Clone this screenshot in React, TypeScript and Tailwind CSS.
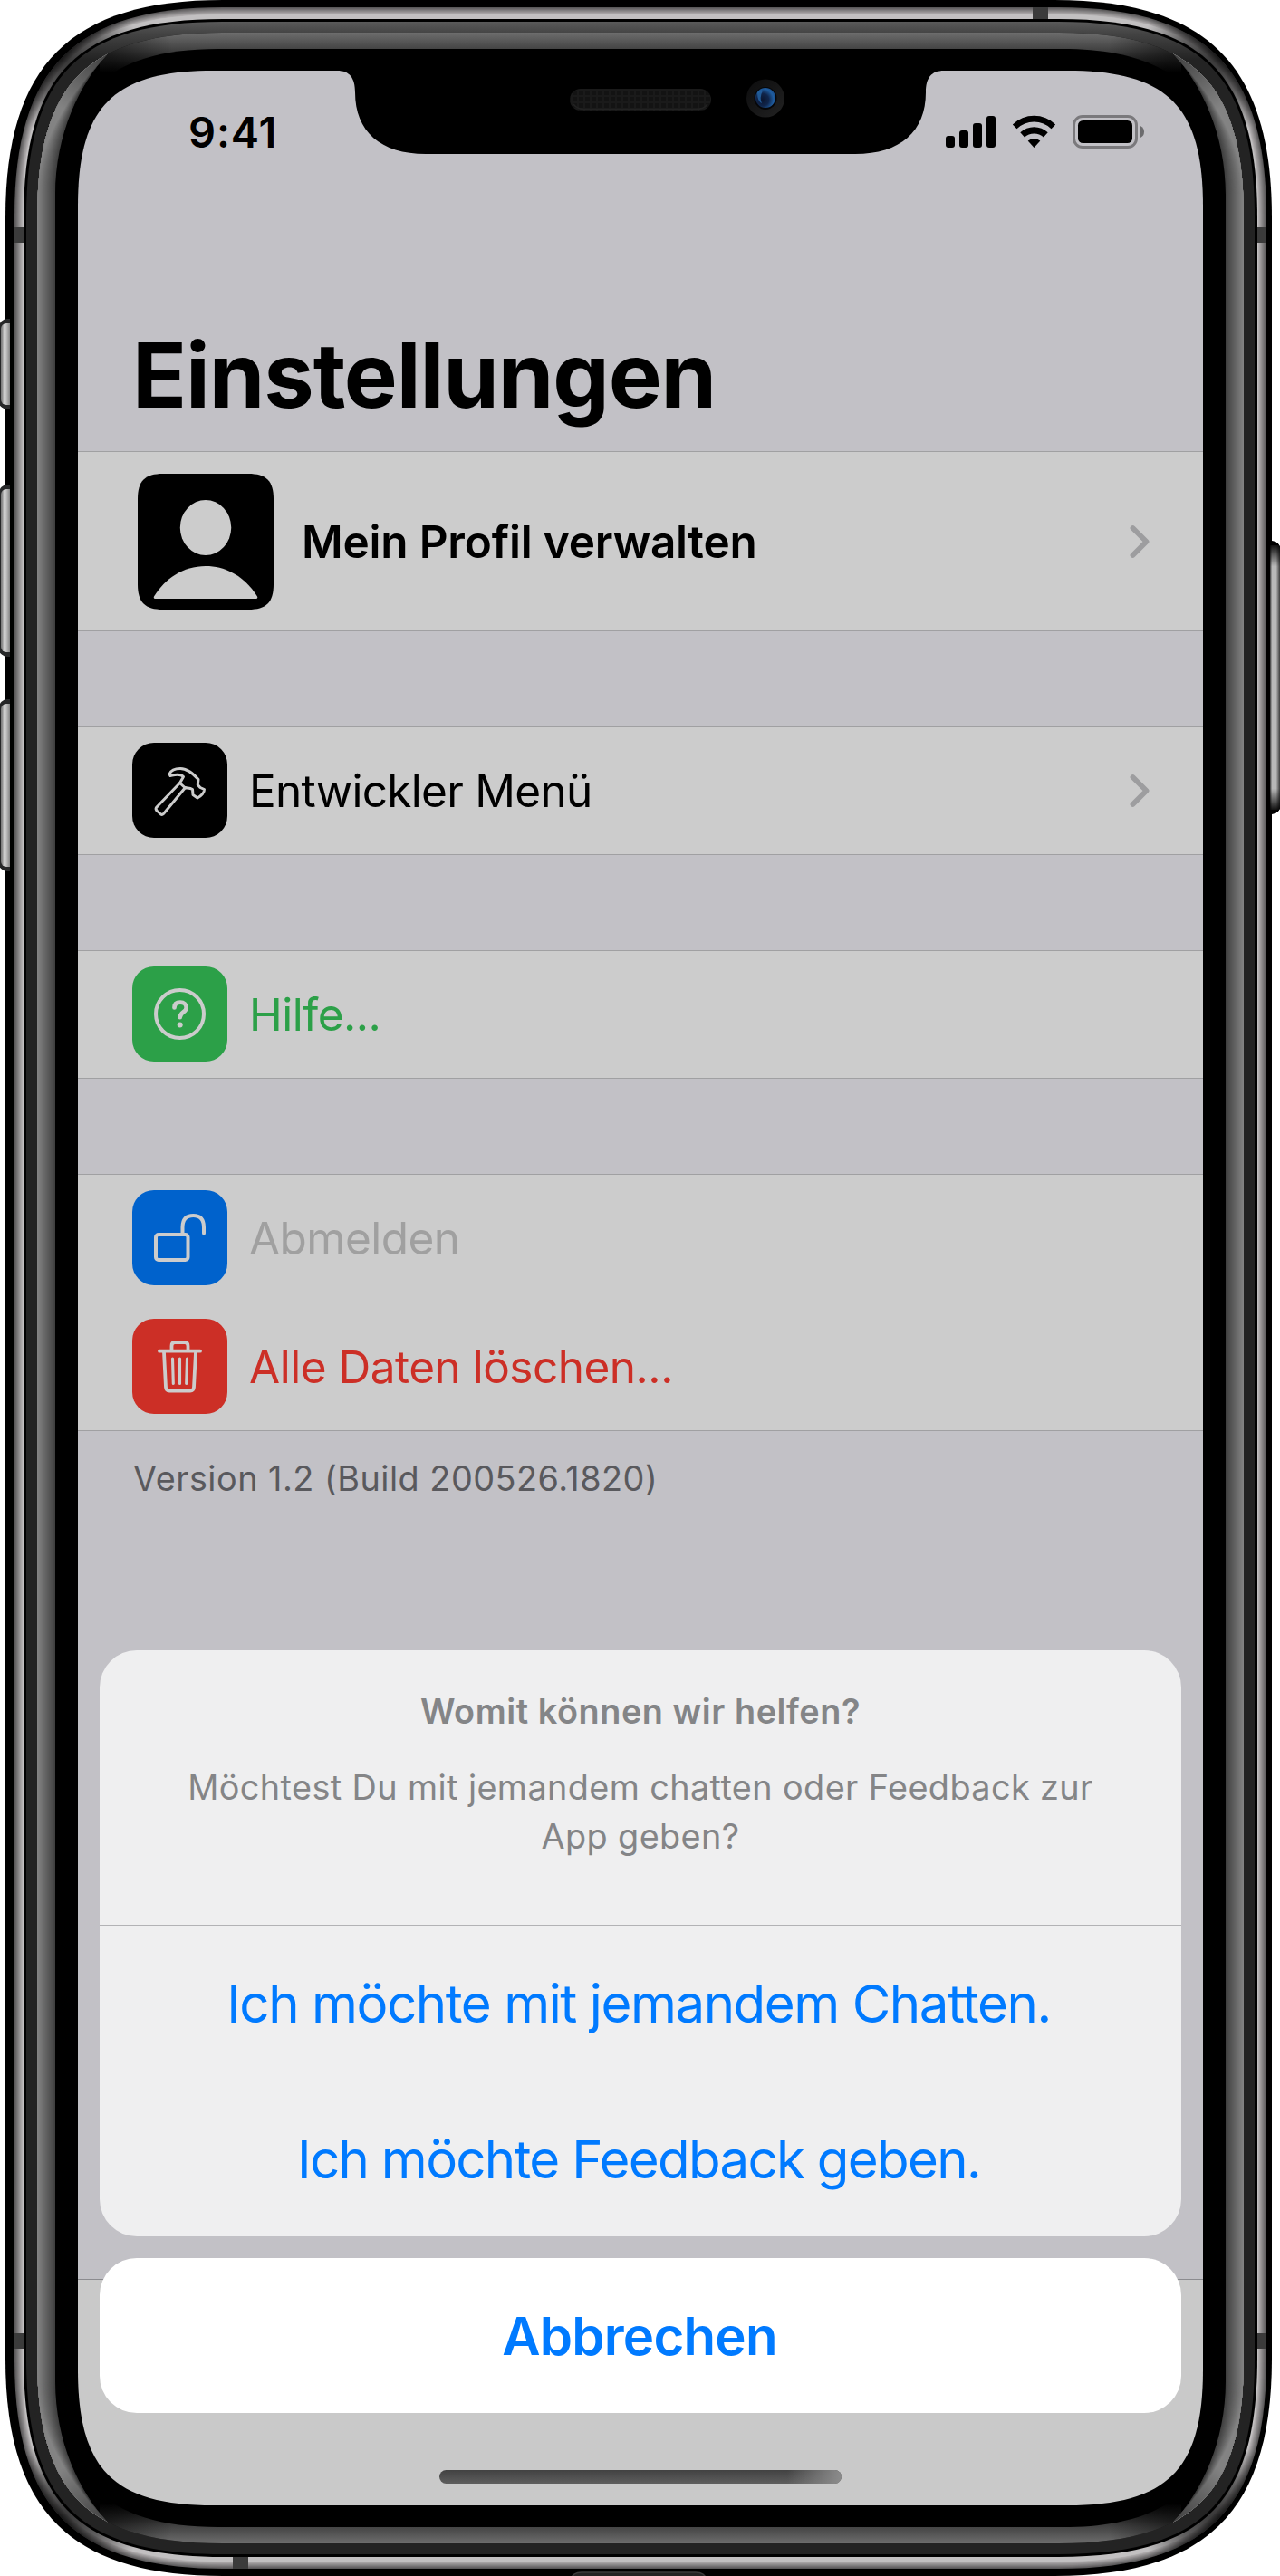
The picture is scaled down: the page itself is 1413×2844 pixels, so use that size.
import React, { type ReactNode } from "react";

/* Closed path of a rectangle whose corners ease in gradually; d is the inset of the corner along its diagonal. */
function smoothRect(l: number, t: number, r: number, b: number, R: number, d: number) {
  const k = R - (4 * R - 8 * d) / 3;
  return [
    `M${l} ${t + R}C${l} ${t + k} ${l + k} ${t} ${l + R} ${t}`,
    `H${r - R}C${r - k} ${t} ${r} ${t + k} ${r} ${t + R}`,
    `V${b - R}C${r} ${b - k} ${r - k} ${b} ${r - R} ${b}`,
    `H${l + R}C${l + k} ${b} ${l} ${b - k} ${l} ${b - R}Z`,
  ].join("");
}

function mix(a: number[], b: number[], t: number) {
  return `rgb(${a.map((v, i) => Math.round(v + (b[i] - v) * t)).join(",")})`;
}

const steps = (n: number) => Array.from({ length: n }, (_, i) => i);

const BODY = smoothRect(6, 0, 1404, 2844, 240, 57);
const METAL = smoothRect(16, 8, 1398, 2836, 230, 54);
const GLASS_EDGE = smoothRect(26, 21, 1388, 2823, 220, 50);
const GLASS = smoothRect(29, 24, 1385, 2820, 217, 49);
const RIM = smoothRect(41, 36, 1373, 2808, 205, 46.5);
const BEZEL = smoothRect(61, 54, 1353, 2790, 180, 43);
const SCREEN = smoothRect(86, 78, 1328, 2766, 150, 33.5);

function sideRim(x: number) {
  return `M20 58H120C88 92 ${x} 148 ${x} 215V2629C${x} 2696 88 2752 120 2786H20Z`;
}

function SideButton({ x, y, h }: { x: number; y: number; h: number }) {
  return (
    <g>
      <rect x={x} y={y} width="22" height={h} rx="9" fill="#262728" />
      <rect x={x + 2} y={y + 5} width="18" height={h - 10} rx="6" fill="url(#buttonShade)" />
    </g>
  );
}

function DeviceFrame() {
  return (
    <svg className="pointer-events-none absolute inset-0" width="1413" height="2844" viewBox="0 0 1413 2844">
      <defs>
        <clipPath id="metalClip"><path d={METAL} /></clipPath>
        <clipPath id="rimClip"><path d={RIM} /></clipPath>
        <mask id="hole">
          <rect width="1413" height="2844" fill="#fff" />
          <path d={SCREEN} fill="#000" />
        </mask>
        <linearGradient id="glassTop" gradientUnits="userSpaceOnUse" x1="0" y1="24" x2="0" y2="66">
          <stop offset="0" stopColor="#5a5a5a" />
          <stop offset=".3" stopColor="#444" />
          <stop offset="1" stopColor="#232323" />
        </linearGradient>
        <linearGradient id="rimTop" gradientUnits="userSpaceOnUse" x1="0" y1="36" x2="0" y2="80">
          <stop offset="0" stopColor="#6d6d6d" />
          <stop offset=".41" stopColor="#444" />
          <stop offset="1" stopColor="#000" />
        </linearGradient>
        <linearGradient id="rimBottom" gradientUnits="userSpaceOnUse" x1="0" y1="2808" x2="0" y2="2764">
          <stop offset="0" stopColor="#6d6d6d" />
          <stop offset=".41" stopColor="#444" />
          <stop offset="1" stopColor="#000" />
        </linearGradient>
        <radialGradient id="cornerShade">
          <stop offset="0" stopColor="#000" stopOpacity=".75" />
          <stop offset=".5" stopColor="#000" stopOpacity=".5" />
          <stop offset="1" stopColor="#000" stopOpacity="0" />
        </radialGradient>
        <radialGradient id="rimShade">
          <stop offset="0" stopColor="#000" stopOpacity=".5" />
          <stop offset=".5" stopColor="#000" stopOpacity=".25" />
          <stop offset="1" stopColor="#000" stopOpacity="0" />
        </radialGradient>
        <linearGradient id="buttonShade" gradientUnits="userSpaceOnUse" x1="2" y1="0" x2="12" y2="0">
          <stop offset="0" stopColor="#808080" />
          <stop offset=".3" stopColor="#dcdcdc" />
          <stop offset="1" stopColor="#747474" />
        </linearGradient>
        <linearGradient id="powerShade" gradientUnits="userSpaceOnUse" x1="1402" y1="0" x2="1413" y2="0">
          <stop offset="0" stopColor="#333" />
          <stop offset=".2" stopColor="#b8b8b8" />
          <stop offset=".6" stopColor="#b8b8b8" />
          <stop offset="1" stopColor="#3a3a3a" />
        </linearGradient>
        <linearGradient id="buttonEnds" x1="0" y1="0" x2="0" y2="1">
          <stop offset="0" stopColor="#000" stopOpacity=".9" />
          <stop offset=".08" stopColor="#000" stopOpacity="0" />
          <stop offset=".92" stopColor="#000" stopOpacity="0" />
          <stop offset="1" stopColor="#000" stopOpacity=".9" />
        </linearGradient>
        <radialGradient id="lens" cx=".35" cy=".6" r=".7">
          <stop offset="0" stopColor="#0b1630" />
          <stop offset=".45" stopColor="#10254b" />
          <stop offset=".8" stopColor="#1f5da0" />
          <stop offset="1" stopColor="#184a86" />
        </radialGradient>
        <linearGradient id="cameraRing" x1="0" y1="0" x2="1" y2="1">
          <stop offset="0" stopColor="#0c0c0d" />
          <stop offset="1" stopColor="#222" />
        </linearGradient>
        <pattern id="mesh" width="7" height="7" patternUnits="userSpaceOnUse">
          <rect width="7" height="7" fill="#131313" />
          <path d="M0 1H7M1 0V7" stroke="#1a1a1a" strokeWidth="2" />
        </pattern>
      </defs>

      <g mask="url(#hole)">
        <path d={BODY} fill="#000" />

        {/* polished steel band */}
        {steps(10).map((i) => (
          <path
            key={i}
            d={smoothRect(16 + i, 8 + i * 0.9, 1398 - i, 2836 - i * 0.9, 230 - i, 54 - i * 0.4)}
            fill={mix([90, 88, 89], [190, 187, 188], i / 9)}
          />
        ))}
        <path d={smoothRect(25, 16, 1389, 2828, 222, 50.5)} fill="#c2c0c1" />
        <g clipPath="url(#metalClip)">
          {[[68, 62], [1346, 62], [68, 2782], [1346, 2782]].map(([x, y]) => (
            <circle key={`${x}-${y}`} cx={x} cy={y} r="86" fill="url(#cornerShade)" />
          ))}
          <path d="M16 251h10v17h-10zM1388 251h10v17h-10zM16 2576h10v17h-10zM1388 2576h10v17h-10zM1140 8h17v13h-17zM257 2823h17v13h-17z" fill="#3b3b3b" />
        </g>
        <path d={GLASS_EDGE} fill="#000" />

        {/* front glass edge */}
        <path d={GLASS} fill="url(#glassTop)" />
        <g clipPath="url(#rimClip)">
          <rect x="41" y="36" width="1332" height="2772" fill="#000" />
          <path d="M110 36H1304V84H110Z" fill="url(#rimTop)" />
          <path d="M110 2808H1304V2760H110Z" fill="url(#rimBottom)" />
          <path d={BEZEL} fill="#000" />
          {[false, true].map((flip) => (
            <g key={String(flip)} transform={flip ? "translate(1414 0) scale(-1 1)" : undefined}>
              {steps(20).map((i) => (
                <path key={i} d={sideRim(61 - i)} fill={mix([64, 64, 64], [131, 131, 131], i / 19)} />
              ))}
              <path d="M41 36H116V150H41ZM41 2808H116V2694H41Z" fill="none" />
              <circle cx="116" cy="62" r="75" fill="url(#rimShade)" />
              <circle cx="116" cy="2782" r="75" fill="url(#rimShade)" />
            </g>
          ))}
        </g>
        <path d="M630 2850V2848Q632 2840 642 2840H768Q778 2840 780 2848V2850Z" fill="#232323" stroke="#3a3a3a" strokeWidth="1.5" />
      </g>

      {/* volume and mute switches */}
      <svg x="0" y="0" width="11" height="2844">
        <SideButton x={-1} y={352} h={100} />
        <SideButton x={-1} y={535} h={190} />
        <SideButton x={-1} y={772} h={190} />
      </svg>
      <svg x="1402" y="597" width="11" height="302" viewBox="1402 597 11 302">
        <rect x="1391" y="597" width="23" height="302" rx="10" fill="#000" />
        <rect x="1402" y="602" width="11" height="292" fill="url(#powerShade)" />
        <rect x="1402" y="602" width="11" height="292" fill="url(#buttonEnds)" />
        <path d="M1406 596H1414V606Q1412 598 1406 597ZM1406 900H1414V890Q1412 898 1406 899Z" fill="#fff" />
      </svg>

      {/* sensor housing */}
      <path d="M372 76V78C386 78 392 86 392 102C392 145 420 170 470 170H944C994 170 1022 145 1022 102C1022 86 1028 78 1042 78V76Z" fill="#000" />
      <rect x="629" y="98" width="156" height="24" rx="12" fill="url(#mesh)" />
      <path d="M633 115Q637 120.500 645 120.500H769Q777 120.500 781 115" fill="none" stroke="#222" strokeWidth="1.500" />
      <circle cx="845" cy="108.500" r="21" fill="url(#cameraRing)" />
      <circle cx="845" cy="108.500" r="12.500" fill="#060608" />
      <circle cx="845" cy="108" r="11" fill="url(#lens)" />
      <path d="M836 102Q839 98 842 100Q838 108 841 114Q836 112 836 102Z" fill="#2667a8" opacity=".8" />
    </svg>
  );
}

function StatusBar() {
  return (
    <div className="mt-[38px] flex h-[60px] shrink-0 items-center justify-between pr-16 pl-[122px]">
      <span className="text-[47px] leading-[60px] font-semibold tracking-[0.88px]">9:41</span>
      <svg width="221" height="40" viewBox="1043 126 221 40">
        <rect x="1044" y="150" width="10" height="13" rx="3" />
        <rect x="1059" y="144" width="10" height="19" rx="3" />
        <rect x="1074" y="136" width="10" height="27" rx="3" />
        <rect x="1089" y="128" width="10" height="35" rx="3" />
        <path d="M1117.800 137.400A34 34 0 0 1 1165.200 137.400L1160.500 142.200A27.500 27.500 0 0 0 1122.500 142.200Z" />
        <path d="M1126.300 146.300A22 22 0 0 1 1156.700 146.300L1152 151.500A15.500 15.500 0 0 0 1131 151.500Z" />
        <path d="M1134.700 155.500A10.500 10.500 0 0 1 1148.300 155.500L1141.500 163Z" />
        <rect x="1185.500" y="128.500" width="69" height="34" rx="9.500" fill="none" stroke="#7a797c" strokeWidth="3" />
        <rect x="1190" y="133" width="60" height="25" rx="5.500" />
        <path d="M1259 139Q1263 141 1263 145.500Q1263 150 1259 152Z" fill="#6c6c6e" />
      </svg>
    </div>
  );
}

function Chevron() {
  return (
    <svg className="ml-auto shrink-0" width="22" height="38" viewBox="0 0 22 38">
      <path d="M3.500 4L18.500 19L3.500 34" fill="none" stroke="#9d9d9f" strokeWidth="5.800" strokeLinecap="round" strokeLinejoin="round" />
    </svg>
  );
}

function Hammer() {
  return (
    <svg width="105" height="105" viewBox="0 0 105 105" fill="none" stroke="#ccc" strokeWidth="3" strokeLinejoin="round" strokeLinecap="round">
      <path d="M41 34.500C43 30 48 28.500 53 28.500C61 28.500 67 34 73 40.500L72.300 46.500L75 49.500L79.500 51.500C79.800 55 76 59 72 61L67 57.500L66.500 51.500C63 49.500 61 50.500 58 49.500L52.500 44.500L56.500 37.500C52 33 45 36 42 36.500Z" />
      <path d="M52.500 44.500L26.500 71.500Q25.500 73 27 75L31.500 79Q33 80 34.500 78.500L58.500 49.500" />
    </svg>
  );
}

function Question() {
  return (
    <div className="flex size-[57px] items-center justify-center rounded-full border-[4.500px] border-[#ccc]">
      <svg width="30" height="36" viewBox="0 0 30 36" fill="none" stroke="#ccc" strokeWidth="4.700" strokeLinecap="round">
        <path d="M8.500 10.500C8.500 6.500 11 4.700 15 4.700C19 4.700 21.700 7 21.700 10.500C21.700 15.500 14.700 15.500 14.700 21.200" />
        <circle cx="14.700" cy="29.500" r="3" fill="#ccc" stroke="none" />
      </svg>
    </div>
  );
}

function Unlock() {
  return (
    <svg width="105" height="105" viewBox="0 0 105 105" fill="none" stroke="#ccc" strokeWidth="4" strokeLinecap="round">
      <rect x="26" y="49" width="35.500" height="28" rx="3" />
      <path d="M55.500 48V41Q55.500 28 67.300 28Q79 28 79 41V47.500" />
    </svg>
  );
}

function Trash() {
  return (
    <svg width="105" height="105" viewBox="0 0 105 105" fill="none" stroke="#ccc" strokeWidth="3.800" strokeLinecap="round" strokeLinejoin="round">
      <path d="M30 35.700H75" />
      <path d="M43.500 35V30Q43.500 26 47 26H58Q61.500 26 61.500 30V35" />
      <path d="M35 37L37 75.500Q37.200 79.500 41 79.500H64Q67.800 79.500 68 75.500L70 37" />
      <path d="M44.500 44L45.300 71.500M52.500 44V71.500M60.500 44L59.700 71.500" strokeWidth="3.100" />
    </svg>
  );
}

function Section({ children }: { children: ReactNode }) {
  return <div className="shrink-0 border-y border-[#a0a0a2] bg-[#ccc]">{children}</div>;
}

function Row({ tile, icon, label, tone, chevron }: { tile: string; icon: ReactNode; label: string; tone: string; chevron?: boolean }) {
  return (
    <div className="flex h-[140px] items-center pl-[60px] pr-[59px]">
      <div className={`mr-6 mb-px flex size-[105px] shrink-0 items-center justify-center rounded-[24px] ${tile}`}>{icon}</div>
      <span className={`whitespace-nowrap text-[49.5px] leading-[60px] ${tone}`}>{label}</span>
      {chevron && <Chevron />}
    </div>
  );
}

function Settings() {
  return (
    <div className="flex h-full flex-col">
      <StatusBar />
      <h1 className="mt-[178px] mb-6 ml-[60px] shrink-0 text-[99px] leading-[120px] font-bold tracking-[-1.1px]">Einstellungen</h1>
      <Section>
        <div className="flex h-[197px] items-center pl-[66px] pr-[59px]">
          <svg className="mr-[31px] shrink-0" width="150" height="150" viewBox="0 0 150 150">
            <path d={smoothRect(0, 0, 150, 150, 28, 6.5)} />
            <ellipse cx="75" cy="59.500" rx="28.200" ry="30.500" fill="#ccc" />
            <path d="M18 135.500C30 116 50 102 75 102C100 102 120 116 132 135.500Q133 138 130.500 138H19.500Q17 138 18 135.500Z" fill="#ccc" />
          </svg>
          <span className="pt-px text-[49.5px] leading-[60px] font-semibold tracking-[-0.2px]">Mein Profil verwalten</span>
          <Chevron />
        </div>
      </Section>
      <div className="h-[105px] shrink-0" />
      <Section>
        <Row tile="bg-black" icon={<Hammer />} label="Entwickler Menü" tone="text-black tracking-[-0.72px]" chevron />
      </Section>
      <div className="h-[105px] shrink-0" />
      <Section>
        <Row tile="bg-[#2ca048]" icon={<Question />} label="Hilfe..." tone="text-[#2ca048] tracking-[-0.5px]" />
      </Section>
      <div className="h-[105px] shrink-0" />
      <Section>
        <Row tile="bg-[#0062cc]" icon={<Unlock />} label="Abmelden" tone="text-[#a0a0a0] tracking-[-0.6px]" />
        <div className="mb-px ml-[60px] h-px bg-[#a0a0a2]" />
        <Row tile="bg-[#cc2f26]" icon={<Trash />} label="Alle Daten löschen..." tone="text-[#cc2f26] tracking-[-0.5px]" />
      </Section>
      <p className="flex h-[104px] shrink-0 items-center pl-[61px] text-[37.8px] text-[#59595d] tracking-[0.49px]">
        Version 1.2 (Build 200526.1820)
      </p>
      <div className="mt-auto h-[250px] shrink-0 border-t border-[#8b8b8f] bg-[#c9c9c9]" />
    </div>
  );
}

function ActionSheet() {
  return (
    <div className="absolute inset-x-6 top-[1744px] flex flex-col gap-6 text-center text-[#007aff]">
      <div className="overflow-hidden rounded-[41px] bg-[#efeff0]">
        <div className="h-[303px] pt-10 text-[37.8px] leading-[54px] text-[#848587]">
          <p className="font-semibold tracking-[0.56px]">Womit können wir helfen?</p>
          <p className="mt-[30px] tracking-[0.4px]">
            Möchtest Du mit jemandem chatten oder Feedback zur
            <br />
            App geben?
          </p>
        </div>
        <button className="block h-[172px] w-full border-t border-[#b2b2b5] pt-0.5 pr-1 text-[58.2px] tracking-[-1.45px]">Ich möchte mit jemandem Chatten.</button>
        <button className="block h-[172px] w-full border-t border-[#b2b2b5] pt-0.5 pr-1 text-[58.2px] tracking-[-1.7px]">Ich möchte Feedback geben.</button>
      </div>
      <button className="block h-[171px] rounded-[41px] bg-white pt-0.5 pr-0.5 text-[58.2px] font-semibold tracking-[-0.8px]">Abbrechen</button>
    </div>
  );
}

function HomeIndicator() {
  return (
    <div className="absolute bottom-6 left-[399px] h-[15px] w-[444px] overflow-hidden rounded-full bg-linear-to-b from-[#424242] to-[#5e5e5e]">
      <div className="ml-auto h-full w-[60px] bg-linear-to-r from-[#888]/0 to-[#8c8c8c]" />
    </div>
  );
}

export default function App() {
  return (
    <div className="relative h-[2844px] w-[1413px] overflow-hidden bg-white pt-[78px] pl-[86px] font-['Inter',sans-serif] text-black">
      <main className="relative h-[2688px] w-[1242px] overflow-hidden rounded-[90px] bg-[#c2c1c6]">
        <Settings />
        <ActionSheet />
        <HomeIndicator />
      </main>
      <DeviceFrame />
    </div>
  );
}
